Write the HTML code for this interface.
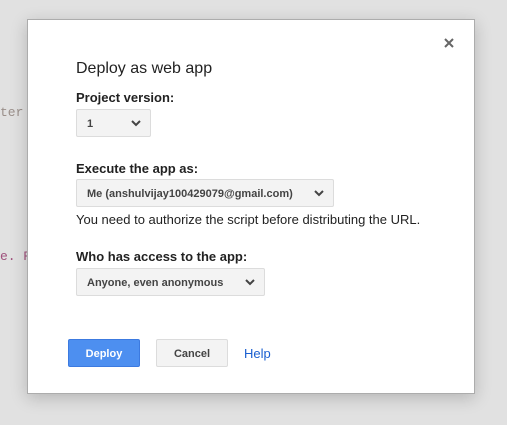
<!DOCTYPE html>
<html><head><style>
body{margin:0;width:507px;height:425px;background:#e1e1e1;position:relative;overflow:hidden;font-family:"Liberation Sans",Arial,sans-serif;}
.code{position:absolute;font-family:"Liberation Mono",monospace;font-size:13px;}
.dlg{position:absolute;left:27px;top:19px;width:446px;height:373px;background:#fff;border:1px solid #acacac;box-shadow:0 4px 16px rgba(0,0,0,.2);}
.a{position:absolute;}
.lbl{font-weight:bold;font-size:13px;color:#222;}
.sel{position:absolute;background:#f3f3f3;border:1px solid #dcdcdc;border-radius:2px;font-size:11px;font-weight:bold;color:#444;line-height:29px;box-sizing:border-box;padding-left:10px;height:28px;}
.sel svg{position:absolute;right:9px;top:10px;}
.btn{position:absolute;height:28px;width:72px;border-radius:2px;font-size:11px;font-weight:bold;text-align:center;line-height:28px;box-sizing:border-box;}
</style></head><body>
<div class="code" style="left:0;top:105px;color:#9a8f8a">ter</div>
<div class="code" style="left:0;top:249px;color:#a0527d">e. R</div>
<div class="dlg">
<svg class="a" style="left:416px;top:18px" width="10" height="10" viewBox="0 0 10 10"><path d="M1 1L9 9M9 1L1 9" stroke="#666" stroke-width="2"/></svg>
<div class="a" style="left:48px;top:40px;font-size:16px;color:#222">Deploy as web app</div>
<div class="a lbl" style="left:48px;top:70px">Project version:</div>
<div class="sel" style="left:48px;top:89px;width:75px">1<svg width="10" height="7" viewBox="0 0 10 7"><path d="M1 1L5 5L9 1" stroke="#444" stroke-width="2" fill="none"/></svg></div>
<div class="a lbl" style="left:48px;top:141px">Execute the app as:</div>
<div class="sel" style="left:48px;top:159px;width:258px">Me (anshulvijay100429079@gmail.com)<svg width="10" height="7" viewBox="0 0 10 7"><path d="M1 1L5 5L9 1" stroke="#444" stroke-width="2" fill="none"/></svg></div>
<div class="a" style="left:48px;top:192px;font-size:13px;color:#222">You need to authorize the script before distributing the URL.</div>
<div class="a lbl" style="left:48px;top:229px">Who has access to the app:</div>
<div class="sel" style="left:48px;top:248px;width:189px">Anyone, even anonymous<svg width="10" height="7" viewBox="0 0 10 7"><path d="M1 1L5 5L9 1" stroke="#444" stroke-width="2" fill="none"/></svg></div>
<div class="btn" style="left:40px;top:319px;background:#4d8ff0;border:1px solid #3c7ae0;color:#fff">Deploy</div>
<div class="btn" style="left:128px;top:319px;background:#f3f3f3;border:1px solid #dcdcdc;color:#444">Cancel</div>
<div class="a" style="left:216px;top:326px;font-size:13px;color:#1a5fd0">Help</div>
</div>
</body></html>
